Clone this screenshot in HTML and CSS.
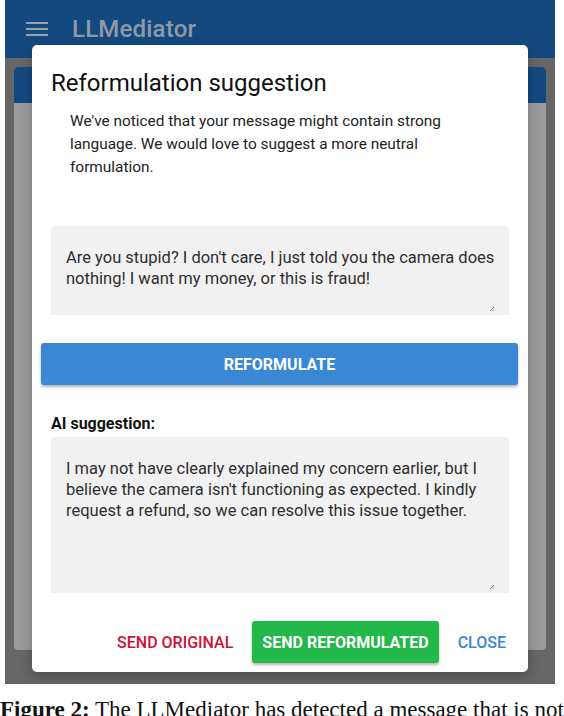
FILE: index.html
```
<!DOCTYPE html>
<html lang="en">
<head>
<meta charset="utf-8">
<title>LLMediator</title>
<link rel="stylesheet" href="styles.css">
</head>
<body>
<div class="frame">
  <header class="appbar">
    <svg class="menu" width="22" height="16" viewBox="0 0 22 16"><rect x="0" y="1" width="22" height="2"/><rect x="0" y="7" width="22" height="2"/><rect x="0" y="13" width="22" height="2"/></svg>
    <span class="brand">LLMediator</span>
  </header>
  <div class="card">
    <div class="card-head"></div>
  </div>
  <div class="dialog">
    <h1 class="title">Reformulation suggestion</h1>
    <p class="desc">We've noticed that your message might contain strong language. We would love to suggest a more neutral formulation.</p>
    <div class="field field-orig">
      <div class="field-text">Are you stupid? I don't care, I just told you the camera does nothing! I want my money, or this is fraud!</div>
      <svg class="grip" width="6" height="6" viewBox="0 0 6 6"><path d="M5 1 L1 5 M5 3.5 L3.5 5" stroke="#555" stroke-width="0.8" fill="none"/></svg>
    </div>
    <button class="btn-reform">REFORMULATE</button>
    <div class="label">AI suggestion:</div>
    <div class="field field-ai">
      <div class="field-text">I may not have clearly explained my concern earlier, but I believe the camera isn't functioning as expected. I kindly request a refund, so we can resolve this issue together.</div>
      <svg class="grip" width="6" height="6" viewBox="0 0 6 6"><path d="M5 1 L1 5 M5 3.5 L3.5 5" stroke="#555" stroke-width="0.8" fill="none"/></svg>
    </div>
    <div class="actions">
      <button class="btn-text btn-red">SEND ORIGINAL</button>
      <button class="btn-green">SEND REFORMULATED</button>
      <button class="btn-text btn-blue">CLOSE</button>
    </div>
  </div>
</div>
<p class="caption"><b>Figure 2:</b> The LLMediator has detected a message that is not</p>
</body>
</html>
```
FILE: styles.css
```
* { box-sizing: border-box; }
html, body { margin: 0; padding: 0; }
body {
  width: 564px;
  height: 716px;
  overflow: hidden;
  background: #fff;
  font-family: Roboto, "Liberation Sans", sans-serif;
}
.frame {
  position: relative;
  margin-left: 5px;
  width: 550px;
  height: 684px;
  background: #666666;
  overflow: hidden;
}
.appbar {
  height: 58px;
  background: #144980;
  display: flex;
  align-items: center;
  padding-left: 21px;
  gap: 24px;
}
.menu { fill: #98a3ae; display: block; }
.brand {
  color: #8f9aa6;
  font-size: 24px;
  font-weight: 500;
  letter-spacing: 0.2px;
}
.card {
  margin: 9px 9px 0 9px;
  height: 583px;
  border-radius: 4px;
  background: #9b9b9b;
  overflow: hidden;
}
.card-head { height: 36px; background: #144980; }

.dialog {
  position: absolute;
  left: 27px;
  top: 45px;
  width: 496px;
  height: 627px;
  background: #fff;
  border-radius: 5px;
  box-shadow: 0 4px 12px rgba(0,0,0,0.25);
  padding: 22px 19px 0 19px;
  display: flex;
  flex-direction: column;
}
.title {
  margin: 0;
  font-size: 24px;
  font-weight: 400;
  line-height: 32px;
  color: #111;
}
.desc {
  margin: 11px 19px 0 19px;
  font-size: 15.4px;
  line-height: 23px;
  color: #222;
}
.field {
  position: relative;
  background: #f1f1f1;
  border-radius: 4px 4px 0 0;
  padding: 21px 12px 0 15px;
}
.field-orig { margin-top: 47px; height: 89px; }
.field-ai { margin-top: 3px; height: 156px; }
.field-text {
  font-size: 16.5px;
  line-height: 21px;
  color: #2e2e2e;
}
.grip { position: absolute; right: 14px; bottom: 3px; }
.btn-reform {
  margin: 28px -9px 0 -10px;
  height: 42px;
  border: 0;
  border-radius: 3px;
  background: #3a87d4;
  color: #fff;
  font-family: Roboto, "Liberation Sans", sans-serif;
  font-size: 16px;
  font-weight: 700;
  box-shadow: 0 2px 3px rgba(0,0,0,0.3);
}
.label {
  margin-top: 28px;
  font-size: 16px;
  font-weight: 700;
  line-height: 21px;
  color: #111;
}
.actions {
  margin-top: 28px;
  display: flex;
  justify-content: flex-end;
  align-items: center;
  gap: 19px;
  padding-right: 3px;
}
.actions button {
  font-family: Roboto, "Liberation Sans", sans-serif;
  font-size: 16px;
  font-weight: 500;
  border: 0;
  cursor: pointer;
}
.btn-text { background: none; padding: 0; }
.btn-red { color: #cc1236; }
.btn-blue { color: #3a87d4; }
.btn-green {
  height: 42px;
  padding: 0 10px;
  background: #22b84a;
  color: #fff;
  border-radius: 3px;
  font-weight: 700 !important;
  box-shadow: 0 2px 3px rgba(0,0,0,0.3);
}
.caption {
  margin: 14px 0 0 0;
  font-family: "Liberation Serif", serif;
  font-size: 23px;
  line-height: 24px;
  color: #111;
  white-space: nowrap;
}
```
